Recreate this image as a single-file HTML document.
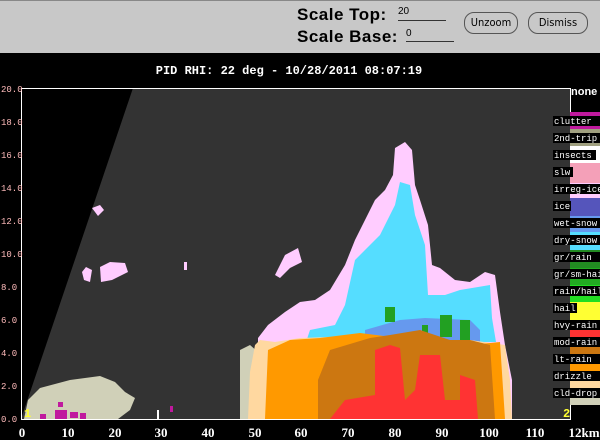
<!DOCTYPE html>
<html><head><style>
body{margin:0;width:600px;height:440px;overflow:hidden;background:#000;font-family:"Liberation Sans",sans-serif}
#hdr{position:absolute;left:0;top:0;width:600px;height:53px;background:#c8c8c8;border-top:1px solid #888;box-sizing:border-box}
.lbl{position:absolute;font-weight:bold;font-size:17px;color:#000;letter-spacing:0.5px}
.btn{position:absolute;top:11px;height:20px;border:1px solid #555;border-radius:10px;font-size:11px;line-height:20px;text-align:center;font-family:"DejaVu Sans Condensed","Liberation Sans",sans-serif}
</style></head><body>
<div id="hdr">
<div class="lbl" style="left:297px;top:4px">Scale Top:</div>
<div class="lbl" style="left:297px;top:26px">Scale Base:</div>
<div style="position:absolute;left:398px;top:5px;font-size:10px">20</div>
<div style="position:absolute;left:398px;top:19px;width:48px;border-top:1px solid #333"></div>
<div style="position:absolute;left:406px;top:27px;font-size:10px">0</div>
<div style="position:absolute;left:406px;top:40px;width:48px;border-top:1px solid #333"></div>
<div class="btn" style="left:464px;width:52px">Unzoom</div>
<div class="btn" style="left:528px;width:58px">Dismiss</div>
</div>
<svg width="600" height="440" style="position:absolute;left:0;top:0" font-family="Liberation Mono,monospace">
<text x="289" y="74" fill="#fff" font-size="12" font-weight="bold" text-anchor="middle">PID  RHI: 22 deg  -  10/28/2011 08:07:19</text>
<rect x="21" y="88" width="549" height="331" fill="#333"/>
<polygon points="21,88 133,88 21,419" fill="#000"/>
<!-- left clutter -->
<polygon points="24,419 28,400 40,388 55,384 70,380 85,378 100,376 115,382 125,392 135,398 130,410 118,419" fill="#d0d0b8"/>
<g fill="#c0199e"><rect x="55" y="410" width="12" height="9"/><rect x="70" y="412" width="8" height="6"/><rect x="80" y="413" width="6" height="6"/><rect x="40" y="414" width="6" height="5"/><rect x="58" y="402" width="5" height="5"/><rect x="170" y="406" width="3" height="6"/></g>
<rect x="157" y="410" width="2" height="9" fill="#fff"/>
<!-- floating pink -->
<g fill="#ffccff"><polygon points="92,208 100,205 104,210 98,216"/><polygon points="82,272 86,267 92,270 90,282 84,280"/><polygon points="100,267 110,262 125,263 128,272 112,280 101,282"/><rect x="184" y="262" width="3" height="8"/></g>
<!-- storm -->
<polygon points="258,419 258,345 258,338 268,325 285,312 300,302 315,300 330,290 345,265 355,240 365,220 375,200 385,190 393,175 395,148 405,142 412,150 415,185 420,200 428,225 432,265 440,268 455,280 470,282 485,272 495,275 500,312 505,345 512,380 512,419" fill="#ffccff"/>
<polygon points="275,275 285,255 298,248 302,262 290,268 280,278" fill="#ffccff"/>
<polygon points="240,419 240,350 250,345 258,352 258,419" fill="#d0d0b8"/>
<polygon points="306,342 310,330 335,325 345,305 355,260 365,250 380,235 395,205 400,182 410,185 415,215 425,245 428,295 445,295 460,290 490,285 492,318 496,342" fill="#55ddff"/>
<polygon points="365,330 400,320 425,318 470,320 480,330 480,360 365,360" fill="#6699ee"/>
<g fill="#22a022"><rect x="385" y="307" width="10" height="15"/><rect x="440" y="315" width="12" height="22"/><rect x="460" y="320" width="10" height="30"/><rect x="422" y="325" width="6" height="20"/></g>
<polygon points="248,419 250,372 255,345 260,340 275,342 300,338 330,337 370,335 420,340 470,340 505,345 510,380 512,419" fill="#ffd8a0"/>
<polygon points="265,419 268,350 290,340 320,338 360,333 400,338 440,340 470,345 500,342 505,419" fill="#ff9900"/>
<polygon points="318,419 318,380 330,350 370,338 390,335 420,330 450,340 470,340 490,345 495,419" fill="#cc7711"/>
<polygon points="330,419 345,400 375,395 375,350 390,345 400,348 405,400 415,390 420,355 440,355 445,400 460,400 460,375 475,380 478,419" fill="#ff3333"/>
<!-- axes -->
<line x1="21" y1="88.5" x2="570" y2="88.5" stroke="#fff"/>
<line x1="21.5" y1="88" x2="21.5" y2="420" stroke="#fff"/>
<line x1="21" y1="419.5" x2="570" y2="419.5" stroke="#fff"/>
<line x1="570.5" y1="88" x2="570.5" y2="420" stroke="#fff"/>
<g fill="#ffbbbb" font-size="9">
<text x="1" y="92">20.0</text><text x="1" y="125">18.0</text><text x="1" y="158">16.0</text><text x="1" y="191">14.0</text><text x="1" y="224">12.0</text><text x="1" y="257">10.0</text><text x="1" y="290">8.0</text><text x="1" y="323">6.0</text><text x="1" y="356">4.0</text><text x="1" y="389">2.0</text><text x="1" y="422">0.0</text></g>
<g fill="#fff" font-size="13" font-weight="bold" font-family="Liberation Serif,serif" text-anchor="middle">
<text x="22" y="437">0</text><text x="68" y="437">10</text><text x="115" y="437">20</text><text x="161" y="437">30</text><text x="208" y="437">40</text><text x="255" y="437">50</text><text x="301" y="437">60</text><text x="348" y="437">70</text><text x="395" y="437">80</text><text x="442" y="437">90</text><text x="489" y="437">100</text><text x="535" y="437">110</text><text x="584" y="437">12km</text></g>
<text x="24" y="417" fill="#ffff33" font-size="12" font-weight="bold">1</text>
<text x="563" y="417" fill="#ffff33" font-size="12" font-weight="bold">2</text>
<!-- legend -->
<text x="571" y="95" fill="#fff" font-size="11" font-weight="bold" font-family="Liberation Sans,sans-serif">none</text>
<g>
<rect x="570" y="112" width="30" height="17" fill="#c0199e"/><rect x="570" y="129" width="30" height="17" fill="#a0a080"/><rect x="570" y="146" width="30" height="17" fill="#fff"/><rect x="570" y="163" width="30" height="20" fill="#f4a0b8"/><rect x="570" y="183" width="30" height="15" fill="#ffccff"/><rect x="570" y="198" width="30" height="18" fill="#5555bb"/><rect x="570" y="216" width="30" height="16" fill="#6699ee"/><rect x="570" y="232" width="30" height="18" fill="#55ddff"/><rect x="570" y="250" width="30" height="18" fill="#228b22"/><rect x="570" y="268" width="30" height="17" fill="#22aa22"/><rect x="570" y="285" width="30" height="17" fill="#22dd22"/><rect x="570" y="302" width="30" height="18" fill="#ffff33"/><rect x="570" y="320" width="30" height="17" fill="#ff3333"/><rect x="570" y="337" width="30" height="17" fill="#cc7711"/><rect x="570" y="354" width="30" height="17" fill="#ff9900"/><rect x="570" y="371" width="30" height="17" fill="#ffd8a0"/><rect x="570" y="388" width="30" height="17" fill="#d0d0b8"/>
</g>
<g font-size="9" fill="#fff">
<g fill="#000"><rect x="553" y="116" width="47" height="10"/><rect x="553" y="133" width="47" height="10"/><rect x="553" y="150" width="43" height="10"/><rect x="553" y="167" width="20" height="10"/><rect x="553" y="184" width="47" height="10"/><rect x="553" y="201" width="18" height="10"/><rect x="553" y="218" width="47" height="10"/><rect x="553" y="235" width="47" height="10"/><rect x="553" y="252" width="47" height="10"/><rect x="553" y="269" width="47" height="10"/><rect x="553" y="286" width="47" height="10"/><rect x="553" y="303" width="24" height="10"/><rect x="553" y="320" width="47" height="10"/><rect x="553" y="337" width="47" height="10"/><rect x="553" y="354" width="47" height="10"/><rect x="553" y="371" width="47" height="10"/><rect x="553" y="388" width="47" height="10"/></g>
<text x="554" y="124">clutter</text><text x="554" y="141">2nd-trip</text><text x="554" y="158">insects</text><text x="554" y="175">slw</text><text x="554" y="192">irreg-ice</text><text x="554" y="209">ice</text><text x="554" y="226">wet-snow</text><text x="554" y="243">dry-snow</text><text x="554" y="260">gr/rain</text><text x="554" y="277">gr/sm-hail</text><text x="554" y="294">rain/hail</text><text x="554" y="311">hail</text><text x="554" y="328">hvy-rain</text><text x="554" y="345">mod-rain</text><text x="554" y="362">lt-rain</text><text x="554" y="379">drizzle</text><text x="554" y="396">cld-drop</text>
</g>
</svg>
</body></html>
